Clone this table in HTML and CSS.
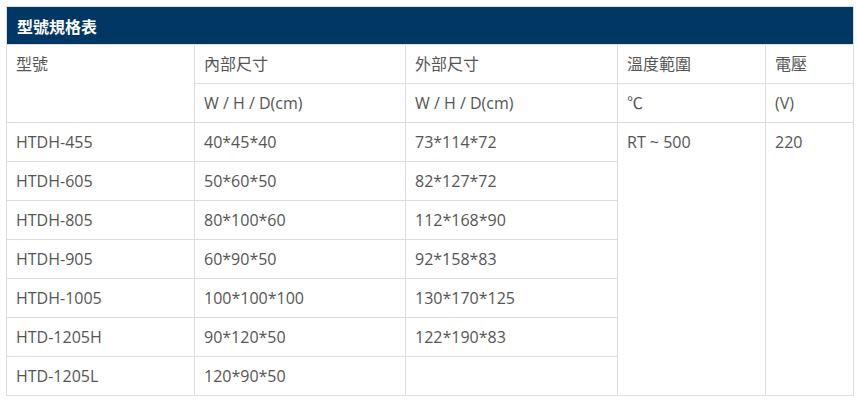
FILE: index.html
```html
<!DOCTYPE html>
<html lang="zh-Hant">
<head>
<meta charset="utf-8">
<link rel="stylesheet" href="styles.css">
</head>
<body>
<table class="spec">
  <colgroup>
    <col class="c1"><col class="c2"><col class="c3"><col class="c4"><col class="c5">
  </colgroup>
  <thead>
    <tr class="title-row"><th colspan="5">型號規格表</th></tr>
  </thead>
  <tbody>
    <tr><td rowspan="2">型號</td><td>內部尺寸</td><td>外部尺寸</td><td>溫度範圍</td><td>電壓</td></tr>
    <tr><td>W / H / D(cm)</td><td>W / H / D(cm)</td><td>℃</td><td>(V)</td></tr>
    <tr><td>HTDH-455</td><td>40*45*40</td><td>73*114*72</td><td rowspan="7">RT ~ 500</td><td rowspan="7">220</td></tr>
    <tr><td>HTDH-605</td><td>50*60*50</td><td>82*127*72</td></tr>
    <tr><td>HTDH-805</td><td>80*100*60</td><td>112*168*90</td></tr>
    <tr><td>HTDH-905</td><td>60*90*50</td><td>92*158*83</td></tr>
    <tr><td>HTDH-1005</td><td>100*100*100</td><td>130*170*125</td></tr>
    <tr><td>HTD-1205H</td><td>90*120*50</td><td>122*190*83</td></tr>
    <tr><td>HTD-1205L</td><td>120*90*50</td><td></td></tr>
  </tbody>
</table>
</body>
</html>
```
FILE: styles.css
```css
html, body {
  margin: 0;
  padding: 0;
  background: #fff;
}
body {
  padding: 6px 0 0 6px;
  font-family: "Open Sans", "Noto Sans CJK TC", sans-serif;
  font-size: 16px;
  color: #555;
}
.spec {
  border-collapse: collapse;
  table-layout: fixed;
  width: 847px;
  border: 1px solid #ddd;
}
.c1 { width: 188px; }
.c2 { width: 211px; }
.c3 { width: 212px; }
.c4 { width: 148px; }
.c5 { width: 88px; }
.title-row th {
  background: #003764;
  color: #fff;
  text-align: left;
  font-weight: bold;
  height: 38px;
  padding: 0 0 0 10px;
  font-size: 16px;
  border: 1px solid #ddd;
  border-bottom: none;
  box-sizing: border-box;
}
.spec td {
  border: 1px solid #ddd;
  padding: 9px 9px 8px 9px;
  line-height: 21px;
  vertical-align: top;
  height: 21px;
}
```
